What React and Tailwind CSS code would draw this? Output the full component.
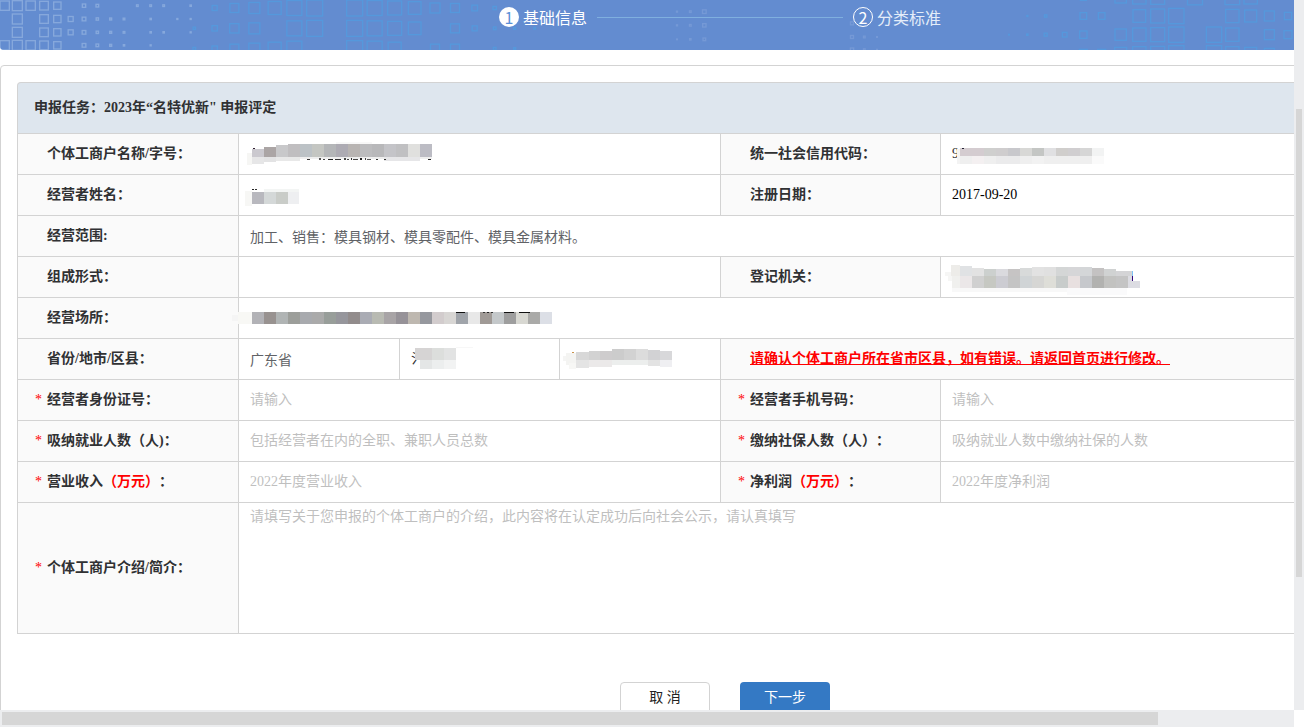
import { clsx } from 'clsx';

// Header decoration: one entry per row, [y, [[x, size], ...]] in thirds of a pixel
const WHITE_SQUARES = [
  [17, [[14, 28], [52, 30], [92, 28], [132, 26], [172, 22], [252, 10], [292, 8], [412, 5], [452, 5], [491, 5], [572, 4]]],
  [57, [[52, 30], [132, 26], [172, 22], [212, 15], [252, 11], [292, 7], [332, 6], [372, 5], [452, 4], [532, 3], [572, 3]]],
  [97, [[52, 30], [132, 26], [172, 22], [212, 15], [252, 11], [292, 7], [332, 6], [372, 5], [452, 4], [491, 4], [572, 3]]],
  [136, [[14, 28], [52, 30], [92, 28], [132, 26], [172, 22], [252, 11], [292, 8], [332, 6], [372, 4], [452, 3]]],
];

const FAINT_SQUARES = [
  [35, [[2031, 3], [2071, 5], [2113, 11]]],
  [76, [[2031, 3], [2071, 5], [2113, 10]]],
  [118, [[2031, 2], [2071, 4], [2113, 8]]],
  [70, [[2556, 9]]],
  [111, [[2556, 9], [2593, 5], [2631, 2]]],
  [149, [[2556, 10], [2593, 5], [2631, 2]]],
];

const BLUE_SQUARES = [
  [24, [[644, 15], [703, 27], [763, 33], [824, 39], [883, 45], [944, 48], [1064, 48], [1124, 45], [1184, 42], [1244, 38], [1305, 30], [1365, 27], [1424, 17], [1484, 10]]],
  [85, [[583, 7], [644, 16], [703, 28], [763, 33], [883, 45], [944, 48], [1064, 48], [1124, 45], [1184, 42], [1244, 38], [1365, 27], [1424, 15], [1484, 8], [1544, 6], [1604, 5]]],
  [146, [[583, 8], [644, 16], [703, 27], [763, 33], [824, 39], [883, 45], [1064, 48], [1124, 45], [1184, 39], [1305, 27], [1365, 27], [1484, 8], [1544, 6]]],
  [-8, [[3250, 18], [3362, 34], [3418, 40], [3473, 42], [3585, 45], [3697, 44], [3752, 40]]],
  [48, [[3082, 3], [3137, 7], [3250, 20], [3305, 20], [3418, 38], [3473, 42], [3529, 46], [3697, 40], [3752, 36], [3808, 30], [3864, 22]]],
  [104, [[3027, 2], [3082, 4], [3137, 9], [3194, 14], [3250, 22], [3362, 34], [3418, 40], [3473, 42], [3529, 46], [3642, 46], [3697, 40], [3808, 30], [3864, 24]]],
  [160, [[3250, 24], [3305, 24], [3362, 36], [3418, 40], [3473, 42], [3529, 46], [3642, 46], [3697, 40], [3752, 36], [3808, 30]]],
];

// Mask blocks: [x, y, width, height, colour] inside the value cell
const strip = (x, y, w, h, colors) => colors.map((c, i) => [x + i * w, y, w, h, c]);

const MASKS = {
  name: [
    [8, 19, 5, 12, '#f6f6f4'],
    [13, 23, 12, 7, '#e6e6e7'], [25, 23, 12, 5, '#e3e3e4'], [37, 23, 24, 4, '#e8e8e8'],
    [61, 23, 132, 2, '#eeeeee'], [145, 23, 36, 4, '#e6e6e8'],
    [97, 8, 36, 2, '#f8f8f8'],
    [13, 15, 12, 8, '#cbc9cf'], [25, 13, 12, 10, '#aba5a5'], [37, 11, 12, 12, '#c8c8ca'],
    ...strip(49, 10, 12, 13, ['#c0bec0', '#bcc2c6', '#c4c6c2', '#b4b6b8', '#adabb3', '#b8b4b2', '#bcbcbe', '#b8b8ba', '#c4c4c8', '#c0c0c2', '#e0e0de', '#bcbcc4']),
    [14, 14, 2, 1, '#302030'],
    [68, 25, 3, 1, '#333'], [80, 24, 2, 2, '#555'], [84, 25, 2, 1, '#444'], [89, 25, 5, 1, '#222'], [96, 25, 6, 1, '#333'],
    [105, 24, 2, 2, '#444'], [108, 25, 2, 1, '#444'], [112, 24, 1, 2, '#333'], [114, 25, 5, 1, '#444'], [121, 24, 2, 2, '#222'],
    [126, 24, 1, 2, '#444'], [128, 25, 4, 1, '#555'],
    [137, 25, 2, 1, '#333'], [145, 25, 2, 1, '#333'], [189, 25, 3, 1, '#222'],
  ],
  owner: [
    [6, 16, 7, 15, '#f7f7f5'], [25, 14, 35, 3, '#f3f5f4'],
    [13, 17, 12, 12, '#b8b8be'], [25, 17, 12, 12, '#d4d8d8'], [37, 17, 12, 12, '#c9ccc8'], [49, 17, 11, 12, '#eeeff1'],
    [13, 14, 2, 1, '#222'], [16, 14, 2, 1, '#333'],
  ],
  code: [
    [16, 15, 3, 15, '#f3f3f3'], [19, 22, 132, 8, '#efefef'], [151, 22, 12, 8, '#fafafa'],
    [55, 22, 24, 8, '#ebebec'], [91, 22, 12, 8, '#f2f2f2'], [31, 22, 12, 8, '#f4f0f1'],
    ...strip(19, 14, 12, 8, ['#d4ccd0', '#d4ccd0', '#cfcfce', '#cfcdce', '#c8c8cc', '#d8d8d6', '#c4c6c4', '#e0e0e2', '#d0cecc', '#d0ced0', '#d6d6d6', '#f2f3f3']),
    [21, 14, 2, 1, '#223'],
  ],
  authority: [
    [4, 15, 7, 4, '#f6f6f5'], [7, 19, 4, 5, '#f6f6f5'], [10, 8, 9, 11, '#edece9'],
    [11, 31, 115, 4, '#f8f8f8'], [126, 31, 60, 7, '#fafafb'],
    [19, 9, 12, 10, '#e0e2e4'], [31, 11, 12, 8, '#e2e2e2'], [43, 12, 12, 7, '#ccd0ce'],
    [55, 12, 12, 7, '#dadade'], [67, 12, 12, 7, '#c6c4c4'], [79, 11, 12, 8, '#d8dada'],
    ...strip(91, 10, 12, 9, ['#e2e2e2', '#e0e0e0', '#d4d6d6', '#d6d6d8', '#d4d6d8']),
    [151, 11, 12, 8, '#c4c2c2'], [163, 12, 12, 7, '#d0d2d2'], [175, 14, 16, 5, '#d4d4d6'],
    [11, 19, 8, 12, '#f0f0ee'],
    ...strip(19, 19, 12, 12, ['#ebe7e8', '#d0d0d0', '#c6c8c2', '#ccccd2', '#c4c4c4', '#d0d4d6', '#d6d6d4', '#deded8', '#c8cccb', '#e8e0e0', '#c6c8cc', '#b2b2b0', '#c2c2c0', '#c4c4c4']),
    [187, 24, 12, 7, '#dcdce2'], [187, 19, 4, 5, '#dcdce2'],
    [191, 14, 1, 5, '#7fc4f5'], [191, 19, 1, 5, '#34087c'],
  ],
  address: [
    [-7, 17, 7, 6, '#f5f5f5'], [-1, 14, 14, 12, '#f8f8f5'],
    ...strip(13, 14, 12, 12, [
      '#b2b2b6', '#989290', '#b0b4b4', '#9c9e9a', '#a8aaae', '#aaaaaa', '#989e9a', '#96969c', '#928c8c',
      '#aaacb4', '#b8bab2', '#a8a4a6', '#969298', '#beb8b0', '#96989e', '#d2cccd', '#d8d6d4', '#a0a4aa',
      '#e8e8e8', '#a09a96', '#c4c8ca', '#9e9e9e', '#d8d8d2', '#aaaaa8', '#dcdfe6',
    ]),
    [217, 14, 9, 1, '#111'], [244, 14, 2, 1, '#333'], [248, 14, 2, 1, '#222'], [252, 14, 2, 1, '#333'],
    [265, 14, 10, 1, '#111'], [280, 14, 11, 1, '#111'],
  ],
  city: [
    [15, 9, 17, 12, '#d6d4d4'], [32, 9, 12, 12, '#dcdedc'], [44, 9, 12, 12, '#e2e3e3'],
    [20, 21, 12, 9, '#e4e6e6'], [32, 21, 12, 9, '#eceeee'], [44, 21, 12, 9, '#f2f3f3'],
    [56, 8, 17, 1, '#f7f7f7'],
  ],
  district: [
    [3, 17, 6, 5, '#f5f5f4'], [6, 14, 10, 12, '#f4f4f2'], [9, 24, 7, 6, '#f7f7f5'],
    [12, 13, 2, 1, '#c9924a'],
    [16, 13, 13, 8, '#d8d8d8'], [29, 12, 11, 9, '#d2d2d2'], [40, 12, 12, 9, '#cecccd'],
    [52, 10, 12, 11, '#cccccc'], [64, 10, 12, 11, '#d2d2d2'], [76, 10, 12, 11, '#dcdcdc'],
    [88, 11, 12, 10, '#d2d2d4'], [100, 12, 12, 9, '#d8d8da'],
    [16, 21, 13, 8, '#e4e4e4'], [29, 21, 23, 7, '#ebe9e9'], [52, 21, 36, 5, '#eceeed'],
    [88, 21, 12, 6, '#e3e3e3'], [100, 21, 12, 7, '#efeff2'],
  ],
};

const Squares = ({ rows, className }) => (
  <g className={className} fill="none" strokeWidth="4">
    {rows.map(([y, items]) =>
      items.map(([x, s]) => <rect key={`${x}-${y}`} x={x - s / 2} y={y - s / 2} width={s} height={s} />)
    )}
  </g>
);

const Masked = ({ id, text }) => (
  <div className="relative flex h-10 items-center pl-[11px] text-[#303133]">
    {text}
    <svg className="absolute left-0 top-0 h-10 w-80 overflow-visible" shapeRendering="crispEdges" aria-hidden="true">
      {MASKS[id].map(([x, y, w, h, fill], i) => (
        <rect key={i} x={x} y={y} width={w} height={h} fill={fill} />
      ))}
    </svg>
  </div>
);

const cell = 'border border-[#d3d3d3] p-0';

const Label = ({ htmlFor, required, children }) => (
  <th scope="row" className={clsx(cell, 'bg-[#fafafa] text-left font-bold text-[#303133]')}>
    <div className="flex items-center pl-[17px]">
      <span className="w-3 shrink-0 font-normal text-[#f00]">{required && '*'}</span>
      <label htmlFor={htmlFor}>{children}</label>
    </div>
  </th>
);

const Value = ({ span = 1, children }) => (
  <td colSpan={span} className={clsx(cell, 'bg-white')}>
    {children}
  </td>
);

const Field = ({ className, ...props }) => (
  <input
    className={clsx('block h-10 w-full bg-transparent px-[11px] outline-none placeholder:text-[#bfbfbf]', className)}
    {...props}
  />
);

const hanValue = "font-['Noto_Sans_CJK_SC',sans-serif] text-[#606266]";

const Unit = () => <span className="text-[#f00]">（万元）</span>;

const Steps = () => (
  <header className="relative h-[50px] overflow-hidden rounded-bl bg-[#638cd0]">
    <svg className="absolute left-0 top-0 h-[50px] w-[1450px]" viewBox="0 0 4350 150" aria-hidden="true">
      <Squares rows={WHITE_SQUARES} className="stroke-[#86a8dc]" />
      <Squares rows={FAINT_SQUARES} className="stroke-[#7599d6]" />
      <Squares rows={BLUE_SQUARES} className="stroke-[#5598dc]" />
    </svg>
    <ol className="relative flex h-[34px] items-center justify-center pr-2.5 font-['Noto_Sans_CJK_SC',sans-serif] text-base text-white">
      <li className="flex items-center gap-1">
        <span className="flex size-5 items-center justify-center rounded-full bg-white text-[#5a8fd6]">1</span>
        基础信息
      </li>
      <li className="mx-2.5 h-px w-[246px] bg-[#7fafdf]" aria-hidden="true" />
      <li className="flex items-center gap-1">
        <span className="flex size-5 items-center justify-center rounded-full border border-white">2</span>
        <span className="text-[#e4edf9]">分类标准</span>
      </li>
    </ol>
  </header>
);

const InfoTable = () => (
  <table className="w-full table-fixed border-collapse">
    <colgroup>
      <col className="w-[221px]" />
      <col className="w-[161px]" />
      <col className="w-[160px]" />
      <col className="w-[161px]" />
      <col className="w-[220px]" />
      <col />
    </colgroup>
    <tbody>
      <tr>
        <Label>个体工商户名称/字号：</Label>
        <Value span={3}><Masked id="name" /></Value>
        <Label>统一社会信用代码：</Label>
        <Value><Masked id="code" text="9" /></Value>
      </tr>
      <tr>
        <Label>经营者姓名：</Label>
        <Value span={3}><Masked id="owner" /></Value>
        <Label htmlFor="regDate">注册日期：</Label>
        <Value><Field id="regDate" readOnly value="2017-09-20" className="text-black" /></Value>
      </tr>
      <tr>
        <Label htmlFor="scope">经营范围:</Label>
        <Value span={5}>
          <Field id="scope" readOnly value="加工、销售：模具钢材、模具零配件、模具金属材料。" className={hanValue} />
        </Value>
      </tr>
      <tr>
        <Label htmlFor="form">组成形式：</Label>
        <Value span={3}><Field id="form" readOnly value="" /></Value>
        <Label>登记机关：</Label>
        <Value><Masked id="authority" /></Value>
      </tr>
      <tr>
        <Label>经营场所：</Label>
        <Value span={5}><Masked id="address" /></Value>
      </tr>
      <tr>
        <Label htmlFor="province">省份/地市/区县：</Label>
        <Value><Field id="province" readOnly value="广东省" className={hanValue} /></Value>
        <Value><Masked id="city" text="氵" /></Value>
        <Value><Masked id="district" /></Value>
        <td colSpan={2} className={clsx(cell, 'bg-[#fafafa]')}>
          <p className="pl-[29px] font-bold text-[#f00] underline">
            请确认个体工商户所在省市区县，如有错误。请返回首页进行修改。
          </p>
        </td>
      </tr>
      <tr>
        <Label htmlFor="idCard" required>经营者身份证号：</Label>
        <Value span={3}><Field id="idCard" placeholder="请输入" /></Value>
        <Label htmlFor="phone" required>经营者手机号码：</Label>
        <Value><Field id="phone" placeholder="请输入" /></Value>
      </tr>
      <tr>
        <Label htmlFor="staff" required>吸纳就业人数（人)：</Label>
        <Value span={3}><Field id="staff" placeholder="包括经营者在内的全职、兼职人员总数" /></Value>
        <Label htmlFor="insured" required>缴纳社保人数（人）：</Label>
        <Value><Field id="insured" placeholder="吸纳就业人数中缴纳社保的人数" /></Value>
      </tr>
      <tr>
        <Label htmlFor="income" required>营业收入<Unit />：</Label>
        <Value span={3}><Field id="income" placeholder="2022年度营业收入" /></Value>
        <Label htmlFor="profit" required>净利润<Unit />：</Label>
        <Value><Field id="profit" placeholder="2022年度净利润" /></Value>
      </tr>
      <tr>
        <Label htmlFor="intro" required>个体工商户介绍/简介：</Label>
        <Value span={5}>
          <textarea
            id="intro"
            className="block h-[130px] w-full resize-none bg-transparent px-[11px] py-1 outline-none placeholder:text-[#bfbfbf]"
            placeholder="请填写关于您申报的个体工商户的介绍，此内容将在认定成功后向社会公示，请认真填写"
          />
        </Value>
      </tr>
    </tbody>
  </table>
);

export default function App() {
  return (
    <div
      lang="zh-CN"
      className="grid h-screen grid-cols-[minmax(0,1fr)_10px] grid-rows-[minmax(0,1fr)_17px] overflow-hidden bg-white font-['Liberation_Serif','Noto_Sans_CJK_SC',serif] text-sm [text-spacing-trim:space-all]"
    >
      <div className="overflow-hidden">
        <div className="min-w-[1450px]">
          <Steps />
          <main className="mt-[15px] rounded-t border border-[#d3d3d3] p-4 pb-12">
            <h1 className="flex h-[51px] items-center rounded-t border border-b-0 border-[#d3d3d3] bg-[#dee6ee] px-4 font-bold text-[#303133]">
              申报任务：2023年“名特优新" 申报评定
            </h1>
            <InfoTable />
            <div className="mt-12 flex justify-center gap-[30px]">
              <button type="button" className="h-8 w-[90px] rounded border border-[#d3d3d3] bg-white text-[#222]">
                取 消
              </button>
              <button type="button" className="h-8 w-[90px] rounded bg-[#3479c4] text-white">
                下一步
              </button>
            </div>
          </main>
        </div>
      </div>

      {/* Vertical scroll track */}
      <div className="grid grid-rows-[109fr_468fr_133fr] bg-[#ecedef] px-0.5">
        <div className="row-start-2 bg-[#d6d6d6]" />
      </div>

      {/* Horizontal scroll track */}
      <div className="grid grid-cols-[1156fr_136fr] bg-[#ecedef] py-0.5 pl-0.5">
        <div className="bg-[#d6d6d6]" />
      </div>
    </div>
  );
}
